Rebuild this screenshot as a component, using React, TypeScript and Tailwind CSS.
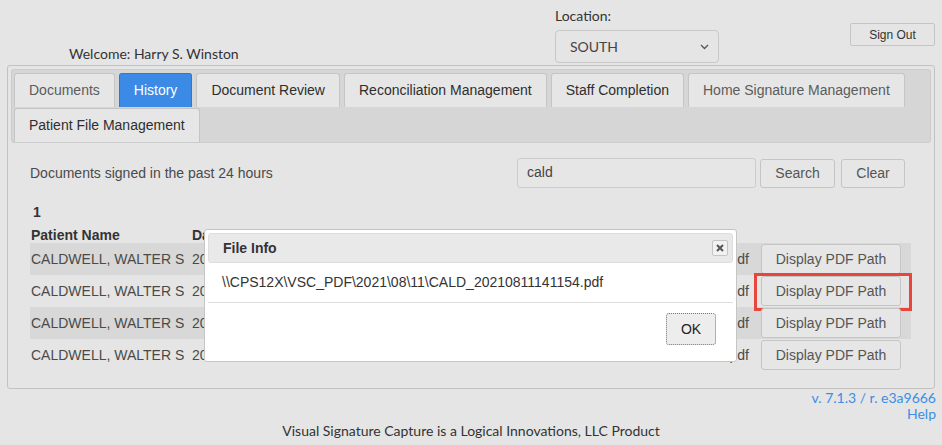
import React from 'react';

const tabs = [
  { label: 'Documents', tone: 'muted' },
  { label: 'History', tone: 'active' },
  { label: 'Document Review', tone: 'dark' },
  { label: 'Reconciliation Management', tone: 'dark' },
  { label: 'Staff Completion', tone: 'dark' },
  { label: 'Home Signature Management', tone: 'muted' },
  { label: 'Patient File Management', tone: 'dark' },
];

const rows = [
  { name: 'CALDWELL, WALTER S', date: '2021-08-11 14:11:54', path: 'CALD-20210811141154.pdf', shaded: true },
  { name: 'CALDWELL, WALTER S', date: '2021-08-11 14:11:54', path: 'CALD-20210811141154.pdf', shaded: false, marked: true },
  { name: 'CALDWELL, WALTER S', date: '2021-08-11 13:52:10', path: 'CALD-20210811135210.pdf', shaded: true },
  { name: 'CALDWELL, WALTER S', date: '2021-08-11 13:40:02', path: 'CALD-20210811134002.pdf', shaded: false },
];

function Tab({ label, tone }: { label: string; tone: string }) {
  const toneClass =
    tone === 'active'
      ? 'bg-[#3a8ae6] border-[#2f78cf] text-white'
      : tone === 'muted'
        ? 'bg-[#e6e6e6] border-[#c5c5c5] text-[#5c5c5c]'
        : 'bg-[#e6e6e6] border-[#c5c5c5] text-[#2e2e2e]';
  return (
    <div className={`h-[34px] px-[14px] flex items-center border border-b-0 rounded-t-[3px] text-[14px] ${toneClass}`}>
      {label}
    </div>
  );
}

function FileInfoDialog() {
  return (
    <div className="absolute z-10 left-[204px] top-[229px] w-[533px] h-[133px] bg-white border border-[#c5c5c5] rounded-[3px] p-[3px] flex flex-col">
      {/* ── title bar ── */}
      <div className="h-[30px] bg-[#e9e9e9] border border-[#dddddd] rounded-[3px] flex items-center justify-between pl-[14px] pr-[4px]">
        <span className="font-bold text-[14px] text-[#333]">File Info</span>
        <button className="w-[16px] h-[16px] border border-[#c5c5c5] bg-[#f2f2f2] rounded-[2px] flex items-center justify-center">
          <svg width="8" height="8" viewBox="0 0 8 8">
            <path d="M1 1 L7 7 M7 1 L1 7" stroke="#555" strokeWidth="2" />
          </svg>
        </button>
      </div>
      <div className="h-[39px] pl-[14px] flex items-center text-[14px] text-[#333]">
        \\CPS12X\VSC_PDF\2021\08\11\CALD_20210811141154.pdf
      </div>
      <div className="border-t border-[#dddddd] flex-1 flex justify-end items-start pt-[10px] pr-[17px]">
        <button className="w-[50px] h-[32px] border border-dotted border-[#777] rounded-[3px] bg-[#ededed] text-[14px] text-[#222]">
          OK
        </button>
      </div>
    </div>
  );
}

export default function App() {
  return (
    <div className="relative w-[942px] h-[445px] bg-[#e5e5e5] font-['Liberation_Sans',Arial,sans-serif] text-[#454545] overflow-hidden">

      {/* ── header ─────────────────────────────────── */}
      <div className="h-[65px] flex font-['Lato',sans-serif] text-[14px] text-[#333]">
        <div className="w-[555px] pl-[69px] flex items-end pb-[1px]">
          <span>Welcome: Harry S. Winston</span>
        </div>
        <div className="w-[164px] flex flex-col">
          <div className="h-[16px] mt-[8px] leading-[16px]">Location:</div>
          <div className="mt-[6px] h-[33px] border border-[#c8c8c8] rounded-[4px] bg-[#e5e5e5] flex items-center justify-between pl-[14px] pr-[9px] text-[#444]">
            <span>SOUTH</span>
            <svg width="9" height="6" viewBox="0 0 9 6">
              <path d="M1 1 L4.5 4.5 L8 1" stroke="#555" strokeWidth="1.3" fill="none" />
            </svg>
          </div>
        </div>
        <div className="flex-1 flex justify-end pr-[7px] pt-[23px]">
          <button className="w-[85px] h-[23px] border border-[#c5c5c5] rounded-[2px] bg-[#e5e5e5] font-['Liberation_Sans',Arial,sans-serif] text-[12px] text-[#333]">
            Sign Out
          </button>
        </div>
      </div>

      {/* ── main panel ─────────────────────────────── */}
      <div className="mx-[7px] h-[324px] border border-[#c2c2c2] rounded-[3px] p-[3px]">
        <div className="bg-[#d6d6d6] border border-[#cccccc] rounded-[3px] pt-[3px] pl-[2px] flex flex-wrap gap-x-[4px] gap-y-[1px]">
          {tabs.map(t => (
            <Tab key={t.label} label={t.label} tone={t.tone} />
          ))}
        </div>

        <div className="pl-[19px] pr-[20px] pt-[14px]">
          <div className="flex items-center">
            <span className="text-[14px] text-[#4a4a4a] mt-[2px]">Documents signed in the past 24 hours</span>
            <div className="ml-auto mr-[6px] flex items-center">
              <div className="w-[239px] h-[30px] border border-[#cccccc] rounded-[3px] bg-[#e6e6e6] flex items-center pl-[9px] text-[14px] text-[#444]">
                cald
              </div>
              <button className="ml-[4px] mt-[2px] w-[75px] h-[29px] border border-[#c5c5c5] rounded-[3px] bg-[#e6e6e6] text-[14px] text-[#555]">
                Search
              </button>
              <button className="ml-[6px] mt-[2px] w-[64px] h-[29px] border border-[#c5c5c5] rounded-[3px] bg-[#e6e6e6] text-[14px] text-[#555]">
                Clear
              </button>
            </div>
          </div>

          <div className="mt-[16px] pl-[3px] leading-[16px] text-[14px] font-bold text-[#333]">1</div>

          <div className="mt-[5px] h-[18px] flex text-[14px] font-bold text-[#333]">
            <div className="w-[162px] pl-[1px]">Patient Name</div>
            <div className="w-[200px]">Date Signed</div>
            <div className="flex-1">Document</div>
            <div className="w-[162px]" />
          </div>

          {rows.map((r, i) => (
            <div key={i} className={`h-[32px] flex items-center text-[14px] text-[#4a4a4a] ${r.shaded ? 'bg-[#d8d8d8]' : ''}`}>
              <div className="w-[162px] pl-[1px] whitespace-nowrap">{r.name}</div>
              <div className="w-[200px] whitespace-nowrap">{r.date}</div>
              <div className="flex-1 text-right whitespace-nowrap">{r.path}</div>
              <div className="w-[162px] pl-[12px] pr-[10px]">
                <div className="relative">
                  <button className="w-[140px] h-[30px] border border-[#c5c5c5] rounded-[3px] bg-[#e6e6e6] text-[14px] text-[#555]">
                    Display PDF Path
                  </button>
                  {r.marked && (
                    <div className="absolute -left-[7px] -top-[3px] w-[158px] h-[38px] border-[3px] border-[#e8453c]" />
                  )}
                </div>
              </div>
            </div>
          ))}
        </div>
      </div>

      {/* ── footer ─────────────────────────────────── */}
      <div className="font-['Lato',sans-serif] text-[14px]">
        <div className="pr-[6px] text-right text-[#3b8ee6] leading-[16px] mt-[1px]">
          <div>v. 7.1.3 / r. e3a9666</div>
          <div>Help</div>
        </div>
        <div className="text-center leading-[16px] mt-[1px] text-[#333]">
          Visual Signature Capture is a Logical Innovations, LLC Product
        </div>
      </div>

      <FileInfoDialog />
    </div>
  );
}
